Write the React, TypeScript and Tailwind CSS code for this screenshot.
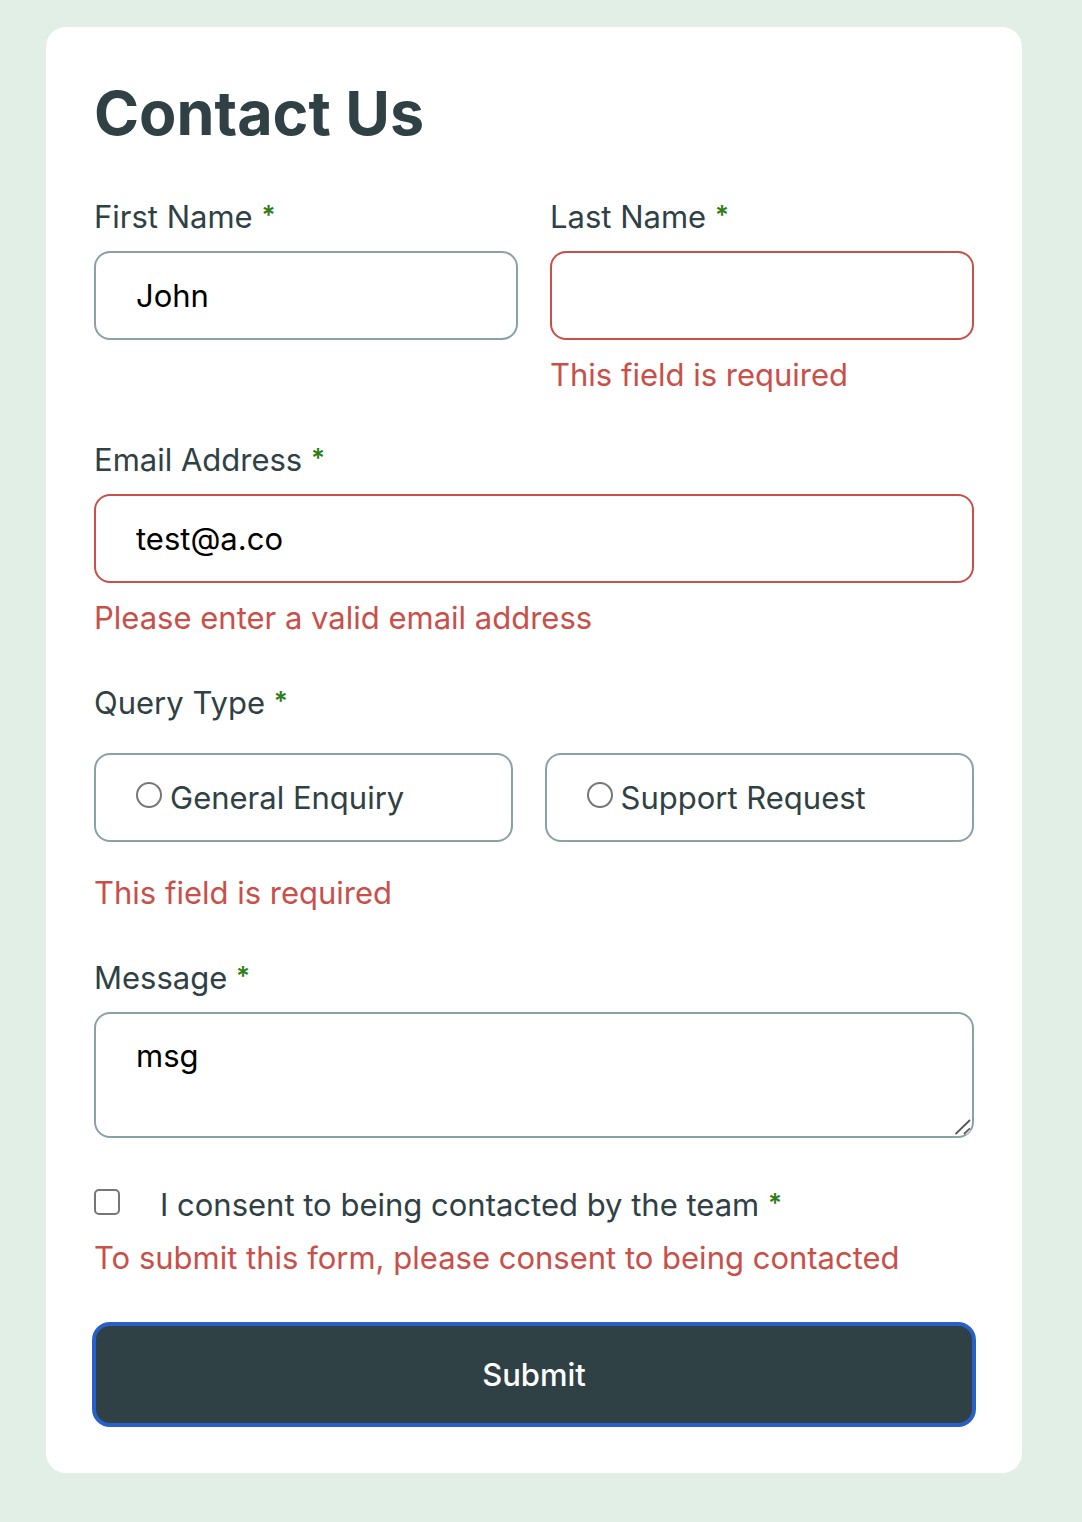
import type { ReactNode } from "react";

const control =
  "block w-full rounded-2xl border-2 bg-white px-10 text-black outline-none";

function Star() {
  return (
    <>
      {" "}
      <span className="align-[4px] text-[26px] leading-none font-semibold text-[#2f7d16]">*</span>
    </>
  );
}

function ErrorText({ id, children }: { id: string; children: ReactNode }) {
  return (
    <p id={id} className="text-[#c94f49]">
      {children}
    </p>
  );
}

export default function App() {
  return (
    <main className="min-h-screen bg-[#e2efe6] pt-[27px] pr-[60px] pb-[49px] pl-[46px] font-['Inter',sans-serif] text-[31px] leading-10 text-[#2f4145]">
      <form
        noValidate
        onSubmit={(e) => e.preventDefault()}
        className="rounded-[20px] bg-white p-12 pb-[46px]"
      >
        <h1 className="mb-[46px] text-[61px] leading-[76px] font-bold">Contact Us</h1>

        <div className="grid grid-cols-2 gap-8">
          <div>
            <label htmlFor="first">
              First Name
              <Star />
            </label>
            <input
              id="first"
              type="text"
              defaultValue="John"
              className={`${control} mt-3.5 h-[89px] border-[#8aa2a6]`}
            />
          </div>
          <div>
            <label htmlFor="last">
              Last Name
              <Star />
            </label>
            <input
              id="last"
              type="text"
              aria-invalid="true"
              aria-describedby="last-error"
              className={`${control} mt-3.5 mb-[15px] h-[89px] border-[#c94f49]`}
            />
            <ErrorText id="last-error">This field is required</ErrorText>
          </div>
        </div>

        <div className="mt-[45px]">
          <label htmlFor="email">
            Email Address
            <Star />
          </label>
          <input
            id="email"
            type="email"
            defaultValue="test@a.co"
            aria-invalid="true"
            aria-describedby="email-error"
            className={`${control} mt-3.5 mb-[15px] h-[89px] border-[#c94f49]`}
          />
          <ErrorText id="email-error">Please enter a valid email address</ErrorText>
        </div>

        <fieldset className="mt-[45px]" aria-describedby="query-error">
          <legend>
            Query Type
            <Star />
          </legend>
          <div className="mt-[30px] mb-[31px] flex gap-8">
            {["General Enquiry", "Support Request"].map((name) => (
              <label
                key={name}
                className="flex h-[89px] grow items-center gap-2 rounded-2xl border-2 border-[#8aa2a6] px-10 whitespace-nowrap"
              >
                <input
                  type="radio"
                  name="query"
                  value={name}
                  className="mb-1.5 size-[26px] shrink-0 appearance-none rounded-full border-2 border-[#767676] bg-white checked:bg-[#2f4145]"
                />
                {name}
              </label>
            ))}
          </div>
          <ErrorText id="query-error">This field is required</ErrorText>
        </fieldset>

        <div className="mt-[45px]">
          <label htmlFor="message">
            Message
            <Star />
          </label>
          <div className="relative mt-3.5">
            <textarea
              id="message"
              defaultValue="msg"
              className={`${control} h-[126px] resize-none border-[#8aa2a6] py-[22px]`}
            />
            <svg
              aria-hidden="true"
              viewBox="0 0 16 16"
              className="pointer-events-none absolute right-[3px] bottom-[3px] size-4"
              fill="none"
              stroke="#555"
              strokeWidth="1.8"
            >
              <path d="M0.5 15L15 1M9 15L15 9.5" />
              <path d="M11 15.5L15.5 11" stroke="#ccc" />
            </svg>
          </div>
        </div>

        <div className="mt-[47px] mb-[13px] flex items-center gap-10">
          <input
            id="consent"
            type="checkbox"
            aria-describedby="consent-error"
            className="mb-1.5 size-[26px] shrink-0 appearance-none rounded-[5px] border-2 border-[#767676] bg-white checked:bg-[#2f4145]"
          />
          <label htmlFor="consent">
            I consent to being contacted by the team
            <Star />
          </label>
        </div>
        <ErrorText id="consent-error">
          To submit this form, please consent to being contacted
        </ErrorText>

        <div className="-mx-0.5 mt-11">
          <button
            type="submit"
            className="block h-[105px] w-full rounded-[18px] border-4 border-[#285fc9] bg-[#2f4145] font-medium text-white"
          >
            Submit
          </button>
        </div>
      </form>
    </main>
  );
}
